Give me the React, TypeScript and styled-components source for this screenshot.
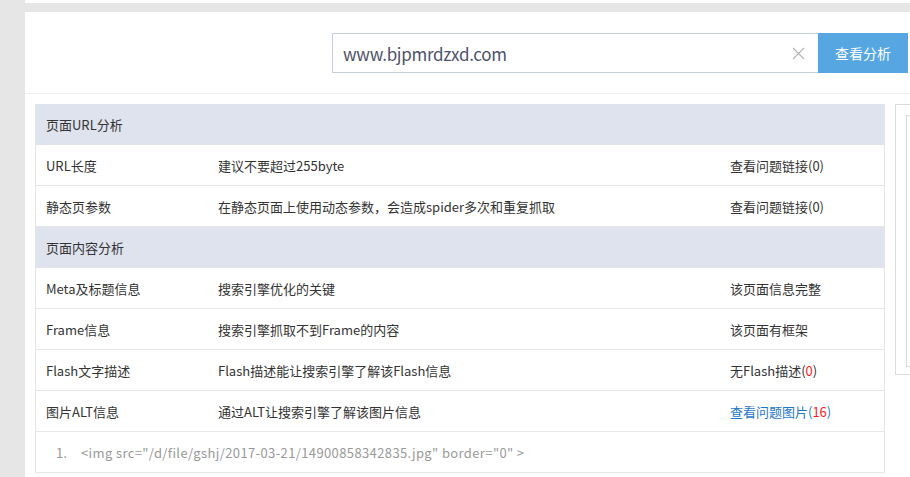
import styled, { createGlobalStyle } from "styled-components"

const GlobalStyle = createGlobalStyle`
  html, body {
    margin: 0;
    padding: 0;
    background: #fff;
    font-family: "Noto Sans CJK SC", "Noto Sans", sans-serif;
    overflow: hidden;
  }
`

const Page = styled.div`
  display: flex;
  height: 477px;
`

const Sidebar = styled.div`
  width: 25px;
  flex-shrink: 0;
  background: #e6e6e6;
`

const Main = styled.div`
  flex: 1;
  display: flex;
  flex-direction: column;
  padding-top: 3px;
  min-width: 0;
`

const TopBar = styled.div`
  height: 9px;
  background: #e6e6e6;
`

const SearchArea = styled.div`
  height: 82px;
  display: flex;
  align-items: flex-start;
  justify-content: flex-end;
  padding: 21px 2px 0 0;
  border-bottom: 1px solid #efefef;
  box-sizing: border-box;
`

const SearchBox = styled.div`
  display: flex;
  height: 40px;
`

const InputWrap = styled.div`
  width: 486px;
  border: 1px solid #c6cddb;
  border-right: none;
  display: flex;
  align-items: center;
  padding: 0 10px;
  box-sizing: border-box;
`

const InputText = styled.span`
  flex: 1;
  font-size: 17px;
  color: #4d5268;
  letter-spacing: -0.3px;
`

const ClearIcon = styled.svg`
  width: 13px;
  height: 13px;
  margin-right: 3px;
`

const SearchButton = styled.button`
  width: 90px;
  border: none;
  background: #56a7e1;
  color: #fff;
  font-family: inherit;
  font-size: 14px;
  padding: 0;
`

const Content = styled.div`
  display: flex;
  gap: 10px;
  padding: 10px 0 0 10px;
`

const Table = styled.div`
  width: 850px;
  flex-shrink: 0;
  border-left: 1px solid #e6e6e6;
  border-right: 1px solid #e6e6e6;
  box-sizing: border-box;
`

const Row = styled.div<{ $head?: boolean }>`
  display: grid;
  grid-template-columns: 172px 512px 1fr;
  height: 41px;
  align-items: center;
  box-sizing: border-box;
  border-bottom: 1px solid ${({ $head }) => ($head ? "#dfe3ee" : "#e6e6e6")};
  background: ${({ $head }) => ($head ? "#dfe3ee" : "#fff")};
  padding-left: 10px;
  font-size: 13px;
  color: #333;
  white-space: nowrap;
`

const CodeRow = styled.div`
  height: 41px;
  display: flex;
  align-items: center;
  padding-left: 20px;
  font-size: 13px;
  color: #999;
  border-bottom: 1px solid #e6e6e6;
  box-sizing: border-box;
  white-space: nowrap;
`

const Num = styled.span`
  width: 25px;
`

const Code = styled.span`
  letter-spacing: 0.38px;
`

const Link = styled.span`
  color: #1f77c9;
`

const Red = styled.span`
  color: #ff1a1a;
`

const SidePanel = styled.div`
  flex: 1;
  height: 271px;
  border: 1px solid #dcdcdc;
  border-right: none;
  padding: 10px 0 0 10px;
  box-sizing: border-box;
`

const SideInner = styled.div`
  height: 250px;
  border: 1px solid #dcdcdc;
  border-right: none;
`

type Item = { name: string; desc: string; result: React.ReactNode }

const urlItems: Item[] = [
  { name: "URL长度", desc: "建议不要超过255byte", result: "查看问题链接(0)" },
  { name: "静态页参数", desc: "在静态页面上使用动态参数，会造成spider多次和重复抓取", result: "查看问题链接(0)" },
]

const contentItems: Item[] = [
  { name: "Meta及标题信息", desc: "搜索引擎优化的关键", result: "该页面信息完整" },
  { name: "Frame信息", desc: "搜索引擎抓取不到Frame的内容", result: "该页面有框架" },
  { name: "Flash文字描述", desc: "Flash描述能让搜索引擎了解该Flash信息", result: <>无Flash描述(<Red>0</Red>)</> },
  {
    name: "图片ALT信息",
    desc: "通过ALT让搜索引擎了解该图片信息",
    result: <Link>查看问题图片(<Red>16</Red>)</Link>,
  },
]

const renderRows = (items: Item[]) =>
  items.map((it) => (
    <Row key={it.name}>
      <span>{it.name}</span>
      <span>{it.desc}</span>
      <span>{it.result}</span>
    </Row>
  ))

export default function App() {
  return (
    <>
      <GlobalStyle />
      <Page>
        <Sidebar />
        <Main>
          <TopBar />
          <SearchArea>
            <SearchBox>
              <InputWrap>
                <InputText>www.bjpmrdzxd.com</InputText>
                <ClearIcon viewBox="0 0 13 13">
                  <path d="M1 1L12 12M12 1L1 12" stroke="#b5b5b5" strokeWidth="1.1" fill="none" />
                </ClearIcon>
              </InputWrap>
              <SearchButton>查看分析</SearchButton>
            </SearchBox>
          </SearchArea>
          <Content>
            <Table>
              <Row $head>
                <span>页面URL分析</span>
              </Row>
              {renderRows(urlItems)}
              <Row $head>
                <span>页面内容分析</span>
              </Row>
              {renderRows(contentItems)}
              <CodeRow>
                <Num>1.</Num>
                <Code>&lt;img src="/d/file/gshj/2017-03-21/14900858342835.jpg" border="0" &gt;</Code>
              </CodeRow>
            </Table>
            <SidePanel>
              <SideInner />
            </SidePanel>
          </Content>
        </Main>
      </Page>
    </>
  )
}
